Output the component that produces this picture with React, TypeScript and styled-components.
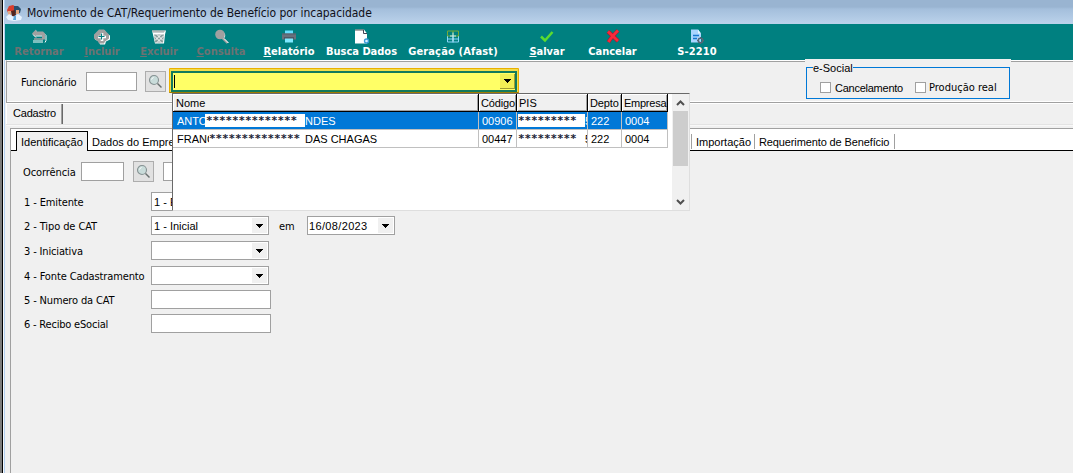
import React from "react";
import styled, { createGlobalStyle, css } from "styled-components";

const tahoma = `"DejaVu Sans Condensed", "DejaVu Sans", sans-serif`;
const msSans = `"Liberation Sans", Arial, sans-serif`;

const GlobalStyle = createGlobalStyle`
  *, *::before, *::after { box-sizing: border-box; }
  body { margin: 0; background: #f0f0f0; color: #000; font: 11px/14px ${msSans}; overflow: hidden; }
`;

const Screen = styled.div`
  display: flex;
  width: 1073px;
  height: 473px;
`;

const FrameEdge = styled.div`
  flex: none;
  width: 5px;
  background: linear-gradient(90deg, #7c7c7c 0 2px, #000 2px 3px, #f4f8fc 3px 4px, #b4cfee 4px 5px);
`;

const Window = styled.div`
  flex: 1;
  min-width: 0;
  display: flex;
  flex-direction: column;
  background: #f0f0f0;
`;

const TitleBar = styled.header`
  flex: none;
  height: 24px;
  display: flex;
  align-items: center;
  gap: 5px;
  padding: 1px 0 0 1px;
  background: linear-gradient(#99b4d1 0 7px, #a4bfdc 9px, #bad1ea 23px);
`;

const Label = styled.span<{ $sans?: boolean; $track?: number; $size?: number; $w?: number; $ink?: string }>`
  flex: none;
  font-family: ${(p) => (p.$sans ? msSans : tahoma)};
  font-size: ${(p) => p.$size ?? 11}px;
  letter-spacing: ${(p) => p.$track ?? 0}px;
  color: ${(p) => p.$ink ?? "#000"};
  white-space: pre;
  ${(p) => p.$w !== undefined && css`width: ${p.$w}px;`}
`;

const Toolbar = styled.nav`
  flex: none;
  height: 36px;
  display: grid;
  grid-template-columns: 68px 58px 56px 68px 68px 77px 106px 82px 49px 120px;
  background: #008080;
`;

const ToolButton = styled.div<{ $disabled?: boolean }>`
  display: flex;
  flex-direction: column;
  align-items: center;
  padding-top: 5px;
  min-width: 0;
  color: ${(p) => (p.$disabled ? "#6d7272" : "#fff")};
  font: bold 11px/14px ${tahoma};
  white-space: nowrap;
  svg { flex: none; }
`;

const ToolText = styled.span<{ $track?: number }>`
  letter-spacing: ${(p) => p.$track ?? 0}px;
`;

const SearchPanel = styled.section`
  flex: none;
  height: 43px;
  margin-left: 1px;
  display: flex;
  align-items: flex-start;
  border-top: 1px solid #fff;
  border-left: 1px solid #a0a0a0;
  border-bottom: 1px solid #a0a0a0;
  box-shadow: inset 0 1px #a0a0a0, inset 0 -1px #fff;
  padding: 10px 0 0 14px;
`;

const Field = styled.div<{ $w: number }>`
  flex: none;
  width: ${(p) => p.$w}px;
  height: 19px;
  display: flex;
  align-items: center;
  justify-content: space-between;
  border: 1px solid #a0a0a0;
  background: #fff;
  padding: 0 1px 0 2px;
  white-space: nowrap;
`;

const DropButton = styled.span<{ $yellow?: boolean }>`
  flex: none;
  display: flex;
  align-items: center;
  justify-content: center;
  width: 15px;
  height: 15px;
  background: ${(p) => (p.$yellow ? "#f2ef55" : "#f0f0f0")};
  ${(p) => p.$yellow && css`border-right: 1px solid #a09c30; border-bottom: 1px solid #a09c30;`}
`;

const LookupButton = styled.div<{ $raise?: number }>`
  flex: none;
  display: flex;
  align-items: center;
  justify-content: center;
  width: 21px;
  height: 21px;
  margin-top: ${(p) => -(p.$raise ?? 0)}px;
  background: #e1e1e1;
  border: 1px solid #adadad;
`;

const Gap = styled.span<{ $w: number }>`
  flex: none;
  width: ${(p) => p.$w}px;
`;

const ComboAnchor = styled.div`
  position: relative;
  flex: none;
  width: 350px;
  margin: -3px 0 0 3px;
`;

const ComboGlow = styled.div`
  height: 25px;
  padding: 1px 1px 0;
  background: #eab000;
  border-bottom: 1px solid #a07c00;
  border-radius: 1px;
`;

const ComboRim = styled.div`
  height: 23px;
  padding: 2px 1px 0;
  background: #f2dc4a;
`;

const ComboBody = styled.div`
  height: 21px;
  display: flex;
  align-items: center;
  justify-content: space-between;
  border: 2px solid #127a5c;
  background: #ffff66;
  padding: 0 0 0 1px;
`;

const Caret = styled.span`
  width: 1px;
  height: 13px;
  background: #000;
`;

const Popup = styled.div`
  position: absolute;
  z-index: 5;
  top: 25px;
  left: 3px;
  width: 518px;
  height: 118px;
  display: flex;
  justify-content: space-between;
  background: #fff;
  border: 1px solid #dedede;
  border-left-color: #696969;
  border-top-color: #696969;
`;

const Grid = styled.div`
  width: 496px;
`;

const columns = "306px 38px 71px 34px 46px";

const HeaderRow = styled.div`
  display: grid;
  grid-template-columns: ${columns};
  width: 495px;
  height: 18px;
  border-bottom: 1px solid #000;
  background: #f0f0f0;
`;

const HeaderCell = styled.div<{ $track?: number }>`
  padding: 2px 0 0 ${(p) => (p.$track === undefined ? 3 : 2)}px;
  letter-spacing: ${(p) => p.$track ?? 0}px;
  border-right: 1px solid #000;
  box-shadow: inset 1px 1px #fff, inset -1px -1px #a0a0a0;
  white-space: nowrap;
`;

const DataRow = styled.div<{ $selected?: boolean }>`
  display: grid;
  grid-template-columns: ${columns};
  width: 495px;
  height: 18px;
  background: ${(p) => (p.$selected ? "#0078d7" : "#fff")};
  color: ${(p) => (p.$selected ? "#fff" : "#000")};
`;

const DataCell = styled.div<{ $pad?: number }>`
  display: flex;
  align-items: center;
  overflow: hidden;
  padding-left: ${(p) => p.$pad ?? 4}px;
  border-right: 1px solid #c0c0c0;
  border-bottom: 1px solid #c0c0c0;
  white-space: nowrap;
`;

const Clip = styled.span<{ $w: number }>`
  flex: none;
  width: ${(p) => p.$w}px;
  overflow: hidden;
`;

const Mask = styled.span<{ $w: number; $pad: number }>`
  flex: none;
  width: ${(p) => p.$w}px;
  height: 13px;
  padding-left: ${(p) => p.$pad}px;
  background: #fff;
  color: #1c2436;
  font: bold 11px/14px "DejaVu Sans Mono", monospace;
  letter-spacing: -0.12px;
`;

const ScrollBar = styled.div`
  width: 17px;
  display: flex;
  flex-direction: column;
  align-items: center;
  background: #f0f0f0;
  svg { flex: none; }
`;

const Thumb = styled.div`
  width: 15px;
  height: 55px;
  background: #cdcdcd;
`;

const ScrollSpace = styled.span`
  flex: 1;
`;

const GroupBox = styled.fieldset`
  position: relative;
  flex: none;
  width: 206px;
  height: 40px;
  margin: -12px 0 0 286px;
  padding: 8px 1px 0;
  border: 0;
  background: #f0f0f0;
`;

const GroupFrame = styled.div`
  width: 204px;
  height: 32px;
  display: flex;
  align-items: flex-start;
  padding: 14px 0 0 13px;
  border: 1px solid #0078d7;
`;

const GroupLegend = styled.span`
  position: absolute;
  top: 2px;
  left: 8px;
  background: #f0f0f0;
`;

const CheckBox = styled.span`
  flex: none;
  width: 11px;
  height: 11px;
  margin-right: 4px;
  background: #fff;
  border: 1px solid #a0a0a0;
`;

const CheckLabel = styled(Label)<{ $shift?: number }>`
  margin: -1px 0 0 ${(p) => p.$shift ?? 0}px;
`;

const OuterTabs = styled.div`
  flex: none;
  height: 22px;
  display: flex;
  align-items: flex-end;
  border-bottom: 1px solid #e3e3e3;
  box-shadow: inset 0 1px #fff, 0 1px #f8f8f8;
  margin-left: 1px;
`;

const OuterTab = styled.div`
  width: 57px;
  height: 20px;
  padding: 2px 0 0 6px;
  letter-spacing: -0.2px;
  border-left: 1px solid #fff;
  border-right: 1px solid #696969;
  box-shadow: inset -1px 0 #a0a0a0;
`;

const Page = styled.main`
  flex: 1;
  margin: 3px 0 0 5px;
  border-top: 1px solid #a0a0a0;
  border-left: 1px solid #a0a0a0;
`;

const TabStrip = styled.div`
  height: 22px;
  display: flex;
  align-items: flex-end;
  padding-left: 5px;
  background: #fff;
  box-shadow: inset 0 -1px #000;
`;

const ActiveTab = styled.div`
  width: 72px;
  height: 20px;
  padding: 3px 0 0 4px;
  border: 1px solid #000;
  border-bottom: 0;
  background: #f0f0f0;
`;

const InnerTab = styled.div<{ $w: number; $track?: number }>`
  flex: none;
  width: ${(p) => p.$w}px;
  height: 15px;
  margin-bottom: 2px;
  padding: 1px 0 0 4px;
  letter-spacing: ${(p) => p.$track ?? 0}px;
  border-right: 1px solid #a0a0a0;
  white-space: nowrap;
`;

const Form = styled.div`
  padding: 11px 0 0 12px;
`;

const FormRow = styled.div<{ $h: number; $inset?: number }>`
  height: ${(p) => p.$h}px;
  padding-left: ${(p) => p.$inset ?? 1}px;
  display: flex;
  align-items: flex-start;
  & > ${Label} { padding-top: 4px; }
`;

const SearchRow = styled.div`
  display: flex;
  padding-top: 1px;
  & > ${Label} { padding-top: 4px; }
`;

const EmLabel = styled(Label)`
  width: 38px;
  padding-left: 10px;
`;

const DateText = styled(Label)`
  margin-left: -1px;
`;

const Arrow = () => (
  <svg width="7" height="4" viewBox="0 0 7 4" shapeRendering="crispEdges">
    <path d="M0 0h7v1H0zM1 1h5v1H1zM2 2h3v1H2zM3 3h1v1H3z" fill="#000" />
  </svg>
);

const Magnifier = () => (
  <svg width="17" height="17" viewBox="0 0 17 17" fill="none">
    <circle cx="7" cy="7" r="4.500" fill="#c9dcda" stroke="#869293" strokeWidth="1.100" />
    <path d="M4.500 6.500a3 3 0 0 1 2-2" stroke="#fff" />
    <path d="M10.500 10.500l4 4" stroke="#68706f" strokeWidth="1.500" />
  </svg>
);

const Chevron = ({ down }: { down?: boolean }) => (
  <svg width="17" height="17" viewBox="0 0 17 17" fill="none">
    <path d={down ? "M5 7l3.5 3.5L12 7" : "M5 11l3.5-3.5L12 11"} stroke="#505050" strokeWidth="2" />
  </svg>
);

const icons: Record<string, React.ReactNode> = {
  back: (
    <>
      <path d="M5 1v3h8l2 2v5l-1 2" stroke="#fff" />
      <path d="M5 0v2h7l2 2v6h-3V6H5v2L1 4z" fill="#a0a0a0" />
      <path d="M5 6.500h6M2 5l3 3" stroke="#fff" />
      <path d="M3 9.500h9" stroke="#a0a0a0" strokeWidth="1.500" />
      <path d="M2.500 12h10" stroke="#fff" strokeWidth="3" strokeDasharray="1 1" />
    </>
  ),
  add: (
    <>
      <path d="M6 1h5l1 3 4 2v4l-4 2-1 3H6l-1-3-4-2V6l4-2z" fill="#fff" />
      <path d="M5 0h5l2 2 3 3v4l-4 3-1 2H5l-1-2-4-3V5l3-3z" fill="#a0a0a0" />
      <path d="M8 3.500v8M4 7.500h8" stroke="#fff" strokeWidth="2.600" />
      <path d="M7.500 4v6M4.500 7h6" stroke="#008080" strokeWidth="1.200" />
    </>
  ),
  trash: (
    <>
      <path d="M1 1h14l-1 4-1 9H4L2 5z" fill="#fff" />
      <path d="M2 2h11v1H2zM3 5h10l-1 8H4z" fill="#8da09f" />
      <path d="M3 6l7 7M6 5l6 6M10 5l-6 6M13 6l-7 7" stroke="#fff" />
      <path d="M1 1.500h13" stroke="#a0a0a0" />
    </>
  ),
  find: (
    <>
      <path d="M11.500 4a5 5 0 0 1-1 5l4.500 4.500" stroke="#fff" />
      <circle cx="7" cy="5" r="4.800" fill="#a0a0a0" />
      <path d="M9 8l5.500 5.500" stroke="#a0a0a0" strokeWidth="2.200" />
      <path d="M11 9l4.500 4.500" stroke="#fff" />
    </>
  ),
  print: (
    <>
      <path d="M4 1h8v4H4z" fill="#66dfff" />
      <path d="M1 4h14v6H1z" fill="#68717d" />
      <path d="M1 4.500h14" stroke="#535e6b" />
      <path d="M3 8h10v1H3z" fill="#39434f" />
      <path d="M4 9h8v4H4z" fill="#7ee9ff" />
    </>
  ),
  doc: (
    <>
      <path d="M1 0h9l3 4v10H1z" fill="#fff" />
      <path d="M9.500 0v4H13" stroke="#445" />
      <path d="M1 .5h8" stroke="#555" />
      <circle cx="12.500" cy="11.500" r="2" fill="#d9f2ff" stroke="#3b9bd8" strokeWidth="1.300" />
    </>
  ),
  table: (
    <>
      <path d="M2.500 6v6.500h11V6M8 6v7M2.500 9.500h11" stroke="#8bd5fa" />
      <path d="M2.500 6.500v-5h11v5zM8 1.500v5" stroke="#75a936" />
      <path d="M8 3v9M5 6.500h6" stroke="#c8efff" />
    </>
  ),
  check: <path d="M2 7l4 4 7.500-8.500" stroke="#5bdc2f" strokeWidth="2.500" />,
  cross: (
    <>
      <path d="M3 2l10 9.500M13 1C9 5 6 8 3.500 12.500" stroke="#b81225" strokeWidth="3.800" />
      <path d="M3 2l10 9.500M13 1C9 5 6 8 3.500 12.500" stroke="#f52b3c" strokeWidth="2.600" />
    </>
  ),
  config: (
    <>
      <path d="M2 0h7l3 4v9H2z" fill="#a9d5ff" />
      <path d="M9 0v4h3" fill="#e5f5ff" />
      <path d="M4 6h6M4 9h4" stroke="#1677cf" strokeWidth="1.300" />
      <circle cx="11.500" cy="11" r="2.200" stroke="#566575" strokeWidth="1.600" />
      <path d="M11.500 7.500v7M8 11h7" stroke="#566575" strokeDasharray="1.500 4" />
    </>
  ),
};

const tools = [
  { icon: "back", text: "Retornar", disabled: true },
  { icon: "add", text: "Incluir", disabled: true, key: true },
  { icon: "trash", text: "Excluir", disabled: true, key: true },
  { icon: "find", text: "Consulta", disabled: true, key: true },
  { icon: "print", text: "Relatório", key: true },
  { icon: "doc", text: "Busca Dados" },
  { icon: "table", text: "Geração (Afast)", track: 0.15 },
  { icon: "check", text: "Salvar", key: true },
  { icon: "cross", text: "Cancelar" },
  { icon: "config", text: "S-2210", track: 0.1 },
];

const AppIcon = () => (
  <svg width="16" height="16" viewBox="0 0 16 16">
    <path d="M1 5l2-4 4-1 3 2v4l-3 1-3-1-2 2z" fill="#d93d2d" />
    <path d="M8 1l4 0 3 3-1 4-4 1-2-3z" fill="#285070" />
    <path d="M2 6h3v4H2zM10 5h3v4h-3z" fill="#e3aa85" />
    <path d="M5 6l4-1 1 5-4 2z" fill="#55251d" />
    <path d="M0 12l3-3 5 3 4-3 4 3-1 3-7 1-6-1z" fill="#e7f3ff" />
    <path d="M8 11h2v4H7z" fill="#5ea7db" />
  </svg>
);

export default function App() {
  return (
    <Screen>
      <GlobalStyle />
      <FrameEdge />
      <Window>
        <TitleBar>
          <AppIcon />
          <Label $size={12} $track={-0.05} $ink="#101018">Movimento de CAT/Requerimento de Benefício por incapacidade</Label>
        </TitleBar>
        <Toolbar>
          {tools.map((t) => (
            <ToolButton key={t.text} $disabled={t.disabled}>
              <svg width="16" height="16" viewBox="0 -0.5 16 16" fill="none">{icons[t.icon]}</svg>
              <ToolText $track={t.track}>
                {t.key ? <><u>{t.text[0]}</u>{t.text.slice(1)}</> : t.text}
              </ToolText>
            </ToolButton>
          ))}
        </Toolbar>
        <SearchPanel>
          <SearchRow>
            <Label $w={65} $track={-0.15}>Funcionário</Label>
            <Field $w={51} />
          </SearchRow>
          <Gap $w={8} />
          <LookupButton><Magnifier /></LookupButton>
          <ComboAnchor>
            <ComboGlow>
              <ComboRim>
                <ComboBody>
                  <Caret />
                  <DropButton $yellow><Arrow /></DropButton>
                </ComboBody>
              </ComboRim>
            </ComboGlow>
            <Popup>
              <Grid>
                <HeaderRow>
                  <HeaderCell>Nome</HeaderCell>
                  <HeaderCell $track={-0.15}>Código</HeaderCell>
                  <HeaderCell $track={0}>PIS</HeaderCell>
                  <HeaderCell $track={-0.15}>Depto</HeaderCell>
                  <HeaderCell $track={-0.25}>Empresa</HeaderCell>
                </HeaderRow>
                <DataRow $selected>
                  <DataCell>
                    <Clip $w={28}>ANTO</Clip>
                    <Mask $w={100} $pad={1}>**************</Mask>
                    <span>NDES</span>
                  </DataCell>
                  <DataCell $pad={3}>00906</DataCell>
                  <DataCell $pad={1}><Mask $w={67} $pad={0}>*********</Mask>5</DataCell>
                  <DataCell $pad={3}>222</DataCell>
                  <DataCell $pad={3}>0004</DataCell>
                </DataRow>
                <DataRow>
                  <DataCell>
                    <Clip $w={32}>FRANC</Clip>
                    <Mask $w={96} $pad={0}>**************</Mask>
                    <span>DAS CHAGAS</span>
                  </DataCell>
                  <DataCell $pad={3}>00447</DataCell>
                  <DataCell $pad={1}><Mask $w={67} $pad={0}>*********</Mask>5</DataCell>
                  <DataCell $pad={3}>222</DataCell>
                  <DataCell $pad={3}>0004</DataCell>
                </DataRow>
              </Grid>
              <ScrollBar>
                <Chevron />
                <Thumb />
                <ScrollSpace />
                <Chevron down />
              </ScrollBar>
            </Popup>
          </ComboAnchor>
          <GroupBox>
            <GroupFrame>
              <CheckBox />
              <CheckLabel $sans $w={80} $track={-0.25}>Cancelamento</CheckLabel>
              <CheckBox />
              <CheckLabel $shift={-1}>Produção real</CheckLabel>
            </GroupFrame>
            <GroupLegend>e-Social</GroupLegend>
          </GroupBox>
        </SearchPanel>
        <OuterTabs>
          <OuterTab>Cadastro</OuterTab>
        </OuterTabs>
        <Page>
          <TabStrip>
            <ActiveTab>Identificação</ActiveTab>
            <InnerTab $w={604}>Dados do Empregado</InnerTab>
            <InnerTab $w={63}>Importação</InnerTab>
            <InnerTab $w={140} $track={-0.12}>Requerimento de Benefício</InnerTab>
          </TabStrip>
          <Form>
            <FormRow $h={30} $inset={0}>
              <Label $w={58} $track={-0.1}>Ocorrência</Label>
              <Field $w={43} />
              <Gap $w={9} />
              <LookupButton $raise={1}><Magnifier /></LookupButton>
              <Gap $w={9} />
              <Field $w={300} />
            </FormRow>
            <FormRow $h={24}>
              <Label $w={127} $track={-0.12}>1 - Emitente</Label>
              <Field $w={300}>1 - Empregador</Field>
            </FormRow>
            <FormRow $h={25}>
              <Label $w={127} $track={-0.1}>2 - Tipo de CAT</Label>
              <Field $w={118}>1 - Inicial<DropButton><Arrow /></DropButton></Field>
              <EmLabel>em</EmLabel>
              <Field $w={88}>
                <DateText $sans $track={0.35}>16/08/2023</DateText>
                <DropButton><Arrow /></DropButton>
              </Field>
            </FormRow>
            <FormRow $h={25}>
              <Label $w={127} $track={-0.15}>3 - Iniciativa</Label>
              <Field $w={118}><span /><DropButton><Arrow /></DropButton></Field>
            </FormRow>
            <FormRow $h={24}>
              <Label $w={127} $track={-0.12}>4 - Fonte Cadastramento</Label>
              <Field $w={118}><span /><DropButton><Arrow /></DropButton></Field>
            </FormRow>
            <FormRow $h={24}>
              <Label $w={127} $track={-0.15}>5 - Numero da CAT</Label>
              <Field $w={120} />
            </FormRow>
            <FormRow $h={24}>
              <Label $w={127} $track={-0.2}>6 - Recibo eSocial</Label>
              <Field $w={120} />
            </FormRow>
          </Form>
        </Page>
      </Window>
    </Screen>
  );
}
